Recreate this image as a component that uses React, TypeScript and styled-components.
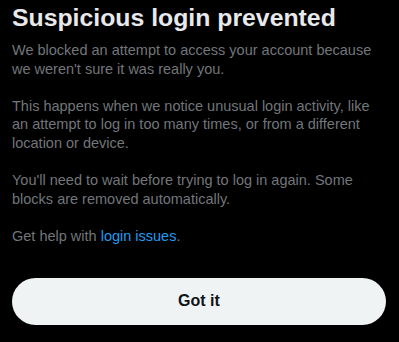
import React from "react";
import styled, { createGlobalStyle } from "styled-components";

const GlobalStyle = createGlobalStyle`
  html, body {
    margin: 0;
    padding: 0;
    background: #000000;
  }
  body {
    font-family: "Liberation Sans", Arial, sans-serif;
    -webkit-font-smoothing: antialiased;
  }
`;

const Dialog = styled.div`
  width: 399px;
  height: 342px;
  box-sizing: border-box;
  padding: 4px 13px 0 12px;
  display: flex;
  flex-direction: column;
  background: #000000;
`;

const Title = styled.h1`
  margin: 0;
  font-size: 24.8px;
  line-height: 28px;
  font-weight: 700;
  color: #e7e9ea;
  letter-spacing: 0;
  white-space: nowrap;
`;

const Body = styled.div`
  margin-top: 9px;
  display: flex;
  flex-direction: column;
  gap: 18.6px;
  font-size: 14.5px;
  line-height: 18.6px;
  color: #71767b;
`;

const Paragraph = styled.p`
  margin: 0;
  white-space: nowrap;
`;

const Link = styled.a`
  color: #1d9bf0;
  text-decoration: none;
`;

const Button = styled.button`
  margin-top: 32px;
  height: 47px;
  width: 100%;
  border: none;
  border-radius: 24px;
  background: #eff3f4;
  color: #0f1419;
  font-family: "Liberation Sans", Arial, sans-serif;
  font-size: 16px;
  font-weight: 700;
  display: flex;
  align-items: center;
  justify-content: center;
  padding: 0;
  cursor: pointer;
`;

export default function App() {
  return (
    <>
      <GlobalStyle />
      <Dialog>
        <Title>Suspicious login prevented</Title>
        <Body>
          <Paragraph>
            We blocked an attempt to access your account because
            <br />
            we weren't sure it was really you.
          </Paragraph>
          <Paragraph>
            This happens when we notice unusual login activity, like
            <br />
            an attempt to log in too many times, or from a different
            <br />
            location or device.
          </Paragraph>
          <Paragraph>
            You'll need to wait before trying to log in again. Some
            <br />
            blocks are removed automatically.
          </Paragraph>
          <Paragraph>
            Get help with <Link href="#">login issues</Link>.
          </Paragraph>
        </Body>
        <Button>Got it</Button>
      </Dialog>
    </>
  );
}
